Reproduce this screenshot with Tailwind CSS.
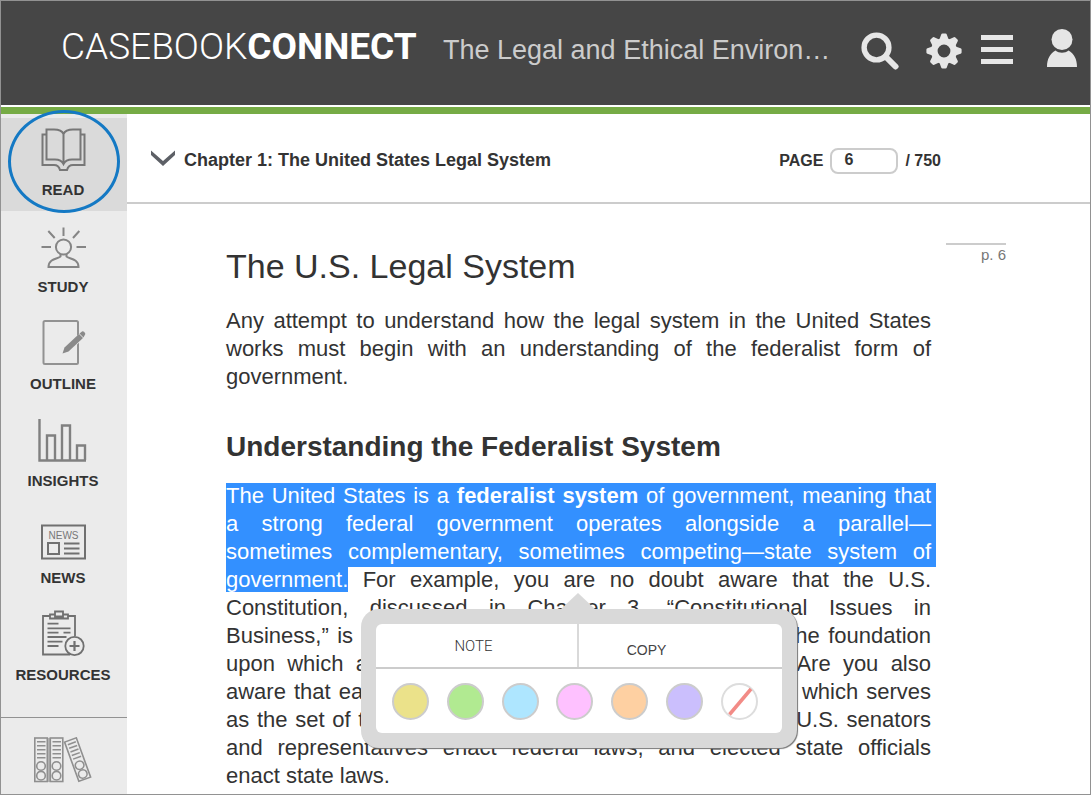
<!doctype html>
<html lang="en">
  <head>
    <meta charset="UTF-8" />
    <meta name="viewport" content="width=device-width, initial-scale=1.0" />
    <title>Casebook Connect</title>
    <script src="https://cdn.jsdelivr.net/npm/@tailwindcss/browser@4"></script>
  </head>
  <body
    class="min-h-screen flex flex-col border border-[#929292] bg-white text-[#333] font-['Liberation_Sans',Arial,sans-serif]"
  >
    <!-- Header -->
    <header
      class="h-[104px] shrink-0 flex items-center bg-[#464646] text-[#e6e6e6] pl-[60px] pr-3 pb-1"
    >
      <a
        href="#"
        class="w-[382px] shrink-0 pb-2 text-[37px] leading-10 text-white whitespace-nowrap font-['Roboto',sans-serif]"
        ><span class="font-light">CASEBOOK</span
        ><span class="font-bold">CONNECT</span></a
      >
      <h1 class="flex-1 min-w-0 truncate pb-0.5 text-[27px] leading-9 text-[#ccc]">
        The Legal and Ethical Environ…
      </h1>
      <div class="flex items-center shrink-0">
        <button title="Search" class="mr-[27px]">
          <svg class="w-[38px] h-[38px]" viewBox="0 0 38 38" fill="none">
            <circle cx="15.5" cy="15.5" r="12.4" stroke="currentColor" stroke-width="5.4" />
            <path d="M24.5 24.5L34.5 34.5" stroke="currentColor" stroke-width="6" stroke-linecap="round" />
          </svg>
        </button>
        <button title="Settings" class="mr-[19px]">
          <svg class="w-9 h-9" viewBox="-18 -18 36 36" fill="currentColor">
            <circle r="9.7" fill="none" stroke="currentColor" stroke-width="6.6" />
            <path id="tooth" d="M-4.6 -11.5L-2.8 -16.6Q-2.5 -17.6 -1.5 -17.6H1.5Q2.5 -17.6 2.8 -16.6L4.6 -11.5Z" />
            <use href="#tooth" transform="rotate(45)" />
            <use href="#tooth" transform="rotate(90)" />
            <use href="#tooth" transform="rotate(135)" />
            <use href="#tooth" transform="rotate(180)" />
            <use href="#tooth" transform="rotate(225)" />
            <use href="#tooth" transform="rotate(270)" />
            <use href="#tooth" transform="rotate(315)" />
          </svg>
        </button>
        <button title="Menu" class="mr-[33px] pb-0.5">
          <svg class="w-8 h-[30px]" viewBox="0 0 32 30" fill="currentColor">
            <path d="M0 0h32v5H0zM0 12h32v5H0zM0 24h32v5H0z" />
          </svg>
        </button>
        <button title="Account" class="pb-1.5">
          <svg class="w-8 h-[38px]" viewBox="0 0 32 38" fill="currentColor">
            <circle cx="16" cy="10.5" r="10.5" />
            <path d="M1 38C1 30 4 24.5 9.5 21.5C13 24.5 19 24.5 22.5 21.5C28 24.5 31 30 31 38Z" />
          </svg>
        </button>
      </div>
    </header>
    <div class="h-[9px] shrink-0 border-t-2 border-white bg-[#76ab45]"></div>

    <div class="flex-1 flex">
      <!-- Sidebar -->
      <nav
        class="w-[126px] shrink-0 flex flex-col bg-[#ebebeb] text-[15px] leading-5 font-bold text-center"
      >
        <a
          href="#"
          class="relative h-[97px] flex flex-col items-center border-t-4 border-[#ebebeb] bg-[#dadada] pt-1.5 pr-0.5"
        >
          <svg class="w-[60px] h-[50px] mb-1.5" viewBox="-1 0 60 50" fill="none" stroke="#777" stroke-width="2">
            <path d="M29.5 10C28 6.5 24 5.5 20 5.5H12.5V35.5H21C25 35.5 28 37 29.5 40C31 37 34 35.5 38 35.5H46.5V5.5H39C35 5.5 31 6.5 29.5 10V40" />
            <path d="M12.5 10.5H8.5V41H20C23 41 25 42 26 46H33C34 42 36 41 39 41H50.5V10.5H46.5" />
          </svg>
          READ
          <span
            class="absolute left-[7px] -top-2 w-28 h-[103px] rounded-[50%] border-[3px] border-[#1479c4]"
          ></span>
        </a>
        <a href="#" class="h-[97px] flex flex-col items-center pt-2.5 pr-0.5">
          <svg class="w-[60px] h-[50px] mb-1.5" viewBox="-1 0 60 50" fill="none" stroke="#858585" stroke-width="2">
            <circle cx="29.5" cy="26" r="7.6" />
            <path d="M26.5 33V35.5C25 38 14.5 37 14.5 46H44.5C44.5 37 34 38 32.5 35.5V33" />
            <path d="M29.5 6.5V15M7.5 26H17M42.5 26H52M14.3 10L20.7 17M45.3 10L39 17" />
          </svg>
          STUDY
        </a>
        <a href="#" class="h-[97px] flex flex-col items-center pt-2.5 pr-0.5">
          <svg class="w-[60px] h-[50px] mb-1.5" viewBox="-1 0 60 50" fill="none" stroke="#929292" stroke-width="2">
            <rect x="9.5" y="3" width="34.5" height="43" rx="1.5" />
            <path d="M36 29L47 18.5" stroke="#ebebeb" stroke-width="6" />
            <path d="M28.5 35.5L30.5 29.5L45 16L49 20L34.5 33.5Z" fill="#8a8a8a" stroke="none" />
            <path d="M45.500 15.5L48 13.500Q49 12.800 50 13.800L51 15Q51.800 16 50.800 17L49.5 19.500Z" fill="#8a8a8a" stroke="none" />
          </svg>
          OUTLINE
        </a>
        <a href="#" class="h-[97px] flex flex-col items-center pt-2.5 pr-0.5">
          <svg class="w-[60px] h-[50px] mb-1.5" viewBox="0 0 60 50" fill="none" stroke="#808080" stroke-width="2.4">
            <path d="M6.5 4V45.5H53M14 45V20.5H22V45M29 45V10.5H37V45M44 45V30.5H52V45" />
          </svg>
          INSIGHTS
        </a>
        <a href="#" class="h-[97px] flex flex-col items-center pt-2.5 pr-0.5">
          <svg class="w-[60px] h-[50px] mb-1.5" viewBox="0 0 60 50" fill="none" stroke="#707070" stroke-width="2">
            <rect x="9" y="13.5" width="43" height="33" />
            <rect x="15" y="31" width="11" height="11" />
            <path d="M31 31.5H46.5M31 36.5H46.5M31 41.5H46.5" />
            <text x="30.5" y="27" text-anchor="middle" font-size="10" font-weight="400" fill="#777" stroke="none">NEWS</text>
          </svg>
          NEWS
        </a>
        <a href="#" class="h-[97px] flex flex-col items-center pt-2.5 pr-0.5">
          <svg class="w-[60px] h-[50px] mb-1.5" viewBox="0 0 60 50" fill="none" stroke="#707070" stroke-width="1.8">
            <path d="M17 7H10V45.5H37M35 7H42V27" />
            <path d="M17 9.5V5.5H22V2.5H30V5.5H35V9.5ZM22 5.5V7.5H30V5.5" />
            <path d="M14.5 14.7H25.5M14.5 19.3H37.5M14.5 23.7H25.5M30.5 23.7H37.5M14.5 28H33.5M14.5 32.7H29.5M14.5 37H25.5" />
            <circle cx="41.5" cy="37" r="9.2" fill="#ebebeb" />
            <path d="M36.5 37H46.5M41.5 32V42" stroke-width="2.2" />
          </svg>
          RESOURCES
        </a>
        <a
          href="#"
          title="Library"
          class="mt-[21px] flex flex-col items-center border-t border-[#929292] pt-[19px]"
        >
          <svg class="w-[60px] h-[46px]" viewBox="0 0 60 46" fill="none" stroke="#8f8f8f" stroke-width="1.6">
            <path d="M14.5 1V45" stroke="#b5b5b5" stroke-width="3" />
            <g id="binder">
              <rect x="0.8" y="1" width="12.5" height="43.5" />
              <path d="M3 4.7H11.5M3 8.7H11.5M3 12.7H11.5M3 16.7H11.5M3 20.7H11.5" />
              <circle cx="7" cy="29" r="4.3" />
              <circle cx="7" cy="38.7" r="4.3" />
            </g>
            <use href="#binder" x="15.5" />
            <use href="#binder" transform="translate(29.5 4.5) rotate(-20) scale(1 0.96)" />
          </svg>
        </a>
      </nav>

      <main class="flex-1 min-w-0">
        <!-- Chapter toolbar -->
        <div
          class="h-[90px] flex items-center justify-between border-b-2 border-[#ccc] pt-1 pl-6 pr-[149px] font-bold"
        >
          <button class="flex items-center gap-[9px] text-[18px] leading-6">
            <svg class="w-6 h-4 mb-1" viewBox="0 0 24 16" fill="#5d6066">
              <path d="M0 0.5L12 11L24 0.5V5L12 16L0 5Z" />
            </svg>
            Chapter 1: The United States Legal System
          </button>
          <div class="flex items-center gap-[7px] pt-0.5 text-base">
            <label for="pageNumber">PAGE</label>
            <input
              id="pageNumber"
              type="text"
              value="6"
              class="w-[68px] h-[26px] rounded-lg border-2 border-[#ccc] bg-white pl-3 pr-2 pb-0.5 text-base font-bold"
            />
            <span>/ 750</span>
          </div>
        </div>

        <!-- Page content -->
        <div class="flex gap-[15px] pl-[99px] pr-[84px]">
          <article class="flex-1 min-w-0 pt-[42px] text-[22px] leading-7">
            <h2 class="text-[34px] leading-10">The U.S. Legal System</h2>
            <p class="mt-[21px] text-justify">
              Any attempt to understand how the legal system in the United States
              works must begin with an understanding of the federalist form of
              government.
            </p>
            <h3 class="mt-[38px] text-[28px] leading-9 font-bold">
              Understanding the Federalist System
            </h3>
            <div class="relative mt-[17px]">
              <!-- Lines break as in the printed book -->
              <p class="text-justify [text-align-last:justify]">
                <span
                  class="box-decoration-clone bg-[#3390ff] pb-[3px] text-white shadow-[5px_0_0_#3390ff]"
                  >The United States is a <strong>federalist system</strong> of
                  government, meaning that<br />a strong federal government
                  operates alongside a parallel—<br />sometimes complementary,
                  sometimes competing—state system of</span
                ><br />
                <span class="bg-[#3390ff] pt-px text-white">government.</span>
                For example, you are no doubt aware that the U.S.<br />
                Constitution, discussed in Chapter 3, “Constitutional Issues in<br />
                Business,” is the supreme law of the land and provides the foundation<br />
                upon which all of the other laws in this country rest. Are you also<br />
                aware that each state also has its own state constitution, which serves<br />
                as the set of the basic laws for that particular state? The U.S. senators<br />
                and representatives enact federal laws, and elected state officials
                <span class="block [text-align-last:left]">enact state laws.</span>
              </p>

              <!-- Highlight menu -->
              <div
                class="absolute left-[135px] top-[127px] w-[436px] rounded-[18px] bg-[#d9d9d9] p-[15px] shadow-[1px_1px_1px_#777]"
              >
                <svg class="absolute left-[200px] -top-4 w-[34px] h-4" viewBox="0 0 34 16" fill="#d9d9d9">
                  <path d="M0 16L17 0L34 16Z" />
                </svg>
                <div class="rounded-md bg-white">
                  <div class="flex h-[45px] border-b-2 border-[#ccc]">
                    <button
                      class="w-[203px] border-r-2 border-[#d9d9d9] pr-1.5 text-[15px] leading-5 font-light text-[#333] font-['Roboto',sans-serif]"
                    >
                      NOTE
                    </button>
                    <button class="flex-1 pr-[68px] pt-2 text-sm text-[#444]">
                      COPY
                    </button>
                  </div>
                  <div class="flex justify-between pl-4 pr-6 pt-[14px] pb-[13px]">
                    <button title="Yellow" class="size-[37px] rounded-full border-2 border-[#ccc] bg-[#ebe28a]"></button>
                    <button title="Green" class="size-[37px] rounded-full border-2 border-[#ccc] bg-[#b1ea91]"></button>
                    <button title="Blue" class="size-[37px] rounded-full border-2 border-[#ccc] bg-[#aee6ff]"></button>
                    <button title="Pink" class="size-[37px] rounded-full border-2 border-[#ccc] bg-[#fec1ff]"></button>
                    <button title="Orange" class="size-[37px] rounded-full border-2 border-[#ccc] bg-[#fed0a2]"></button>
                    <button title="Purple" class="size-[37px] rounded-full border-2 border-[#ccc] bg-[#cbbffd]"></button>
                    <button title="Remove highlight" class="size-[37px] rounded-full border-2 border-[#ddd] bg-white">
                      <svg class="size-[33px]" viewBox="0 0 33 33" fill="none">
                        <path d="M6.5 29.5L28 4" stroke="#f28b86" stroke-width="3.5" />
                      </svg>
                    </button>
                  </div>
                </div>
              </div>
            </div>
          </article>
          <aside
            class="mt-[39px] w-[60px] h-fit shrink-0 border-t-2 border-[#ccc] text-right text-[15px] leading-5 text-[#777]"
          >
            p. 6
          </aside>
        </div>
      </main>
    </div>
  </body>
</html>
